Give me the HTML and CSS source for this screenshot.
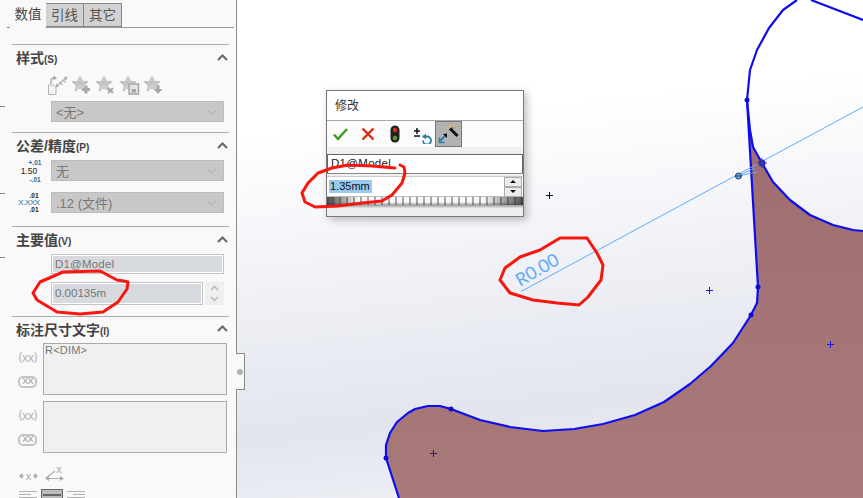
FILE: index.html
```html
<!DOCTYPE html>
<html>
<head>
    <title>Modify dimension</title>
    <meta charset="UTF-8">
    <link rel="stylesheet" href="styles.css">
</head>
<body>
    <svg width="0" height="0" class="defs">
        <defs>
            <linearGradient id="starGrey" x1="0" y1="0" x2="0" y2="1">
                <stop offset="0" stop-color="#cfcfcf"/>
                <stop offset="0.5" stop-color="#c4c4c4"/>
                <stop offset="1" stop-color="#dcdcdc"/>
            </linearGradient>
            <symbol id="star" viewBox="0 0 20 20">
                <path d="M8 1l2.300 5.200 5.700.5-4.300 3.700 1.300 5.600L8 13.100l-5 2.900 1.300-5.600L0 6.700l5.700-.5z" fill="url(#starGrey)" stroke="#b4b4b4" stroke-width="0.700"/>
            </symbol>
        </defs>
    </svg>

    <!-- Property manager -->
    <div class="panel">
        <span class="tick tick-1"></span>
        <span class="tick tick-2"></span>
        <span class="tick tick-3"></span>
        <span class="tick tick-4"></span>
        <div class="tabs">
            <div class="tab tab-active">数值</div>
            <div class="tab">引线</div>
            <div class="tab">其它</div>
        </div>

        <div class="section section-style">
            <div class="section-head"><span class="section-title">样式<small>(S)</small></span><svg class="caret" width="11" height="7" viewBox="0 0 11 7"><path d="M1 6l4.500-4.500L10 6"/></svg></div>
            <div class="style-icons">
                <svg width="20" height="20" viewBox="0 0 20 20">
                    <path d="M.5 10h5l2.500 2.500v7h-7.500z" class="doc"/>
                    <path d="M3 9V6a3 3 0 0 1 3-3" class="doc-arrow"/>
                    <path d="M5.500 .5L9 3 5.500 5.500z" class="fill-grey"/>
                    <path d="M9 11l9-8M11.500 7l3 3M14.500 4.500l3 3" class="dim-arrow"/>
                    <path d="M7.500 12.500l1-4 2.500 3zM19.500 1.500l-1.200 4-2.500-3z" class="fill-grey"/>
                </svg>
                <svg width="20" height="20" viewBox="0 0 20 20"><use href="#star" width="20" height="20"/><path d="M10 14.500h8M14 10.500v8" class="badge"/></svg>
                <svg width="20" height="20" viewBox="0 0 20 20"><use href="#star" width="20" height="20"/><path d="M12 13l5 5M17 13l-5 5" class="badge-thin"/></svg>
                <svg width="20" height="20" viewBox="0 0 20 20"><use href="#star" width="20" height="20"/><rect x="9" y="9" width="9.500" height="10" class="floppy"/><rect x="11.500" y="14" width="4.500" height="3.500" class="floppy-in"/></svg>
                <svg width="20" height="20" viewBox="0 0 20 20"><use href="#star" width="20" height="20"/><path d="M12.500 10h3v4h3l-4.500 5-4.500-5h3z" class="fill-grey"/></svg>
            </div>
            <div class="select-row">
                <div class="select select-style">&lt;无&gt;<svg class="chevron" width="11" height="6" viewBox="0 0 11 6"><path d="M1 1l4.500 4L10 1"/></svg></div>
            </div>
        </div>

        <div class="section section-tol">
            <div class="section-head"><span class="section-title">公差/精度<small>(P)</small></span><svg class="caret" width="11" height="7" viewBox="0 0 11 7"><path d="M1 6l4.500-4.500L10 6"/></svg></div>
            <div class="select-row">
                <div class="tol-icon"><span class="tol-up">+.01</span><span class="tol-mid">1.50</span><span class="tol-up">-.01</span></div>
                <div class="select">无<svg class="chevron" width="11" height="6" viewBox="0 0 11 6"><path d="M1 1l4.500 4L10 1"/></svg></div>
            </div>
            <div class="select-row">
                <div class="tol-icon"><span class="tol-side">.01</span><span class="tol-x">X.XXX</span><span class="tol-side">.01</span></div>
                <div class="select">.12 (文件)<svg class="chevron" width="11" height="6" viewBox="0 0 11 6"><path d="M1 1l4.500 4L10 1"/></svg></div>
            </div>
        </div>

        <div class="section section-main">
            <div class="section-head"><span class="section-title">主要值<small>(V)</small></span><svg class="caret" width="11" height="7" viewBox="0 0 11 7"><path d="M1 6l4.500-4.500L10 6"/></svg></div>
            <div class="field field-name">D1@Model</div>
            <div class="value-row">
                <div class="field field-value">0.00135m</div>
                <div class="spin">
                    <svg width="9" height="6" viewBox="0 0 9 6"><path d="M1 5l3.500-3.500L8 5"/></svg>
                    <svg width="9" height="6" viewBox="0 0 9 6"><path d="M1 1l3.500 3.500L8 1"/></svg>
                </div>
            </div>
        </div>

        <div class="section section-text">
            <div class="section-head section-head-text"><span class="section-title">标注尺寸文字<small>(I)</small></span><svg class="caret" width="11" height="7" viewBox="0 0 11 7"><path d="M1 6l4.500-4.500L10 6"/></svg></div>
            <div class="text-row">
                <div class="text-icons">
                    <span class="paren">(xx)</span>
                    <span class="boxed">xx</span>
                </div>
                <div class="text-box">R&lt;DIM&gt;</div>
            </div>
            <div class="text-row text-row-two">
                <div class="text-icons">
                    <span class="paren">(xx)</span>
                    <span class="boxed">xx</span>
                </div>
                <div class="text-box"></div>
            </div>
            <div class="extra-icons">
                <svg width="19" height="12" viewBox="0 0 19 12">
                    <path d="M0 6l3.500-3v6zM19 6l-3.500-3v6z" class="fill-grey"/>
                    <path d="M3 6h2M14 6h2" class="dim-arrow"/>
                    <text x="9.500" y="9.500" class="icon-x">x</text>
                </svg>
                <svg width="19" height="17" viewBox="0 0 19 17">
                    <path d="M1 13l9-7M1 13.500h17" class="dim-arrow"/>
                    <path d="M0 13.500l4-2.500v5zM19 13.500l-4-2.500v5z" class="fill-grey"/>
                    <text x="14" y="8" class="icon-x">x</text>
                </svg>
            </div>
            <div class="align-icons">
                <svg width="18" height="12" viewBox="0 0 18 12"><path d="M0 1.500h18M0 4.500h12M0 7.500h18" class="align-line"/></svg>
                <span class="align-on"><svg width="18" height="12" viewBox="0 0 18 12"><path d="M0 2h18M4 6h10" class="align-line-on"/></svg></span>
                <svg width="18" height="12" viewBox="0 0 18 12"><path d="M0 1.500h18M6 4.500h12M0 7.500h18" class="align-line"/></svg>
            </div>
        </div>
        <div class="notch"><span class="notch-dot"></span></div>
    </div>

    <!-- Graphics area -->
    <div class="canvas">
        <svg class="model" width="626" height="498" viewBox="237 0 626 498">
            <defs>
                <linearGradient id="body" x1="0" y1="0" x2="0" y2="1">
                    <stop offset="0" stop-color="#9e6d71"/>
                    <stop offset="1" stop-color="#a97a7a"/>
                </linearGradient>
            </defs>
            <path class="body" d="M399 498L386 458V445L390 433L397 422L408 413L415 409L428 406H440L451 409L480 420L510 427L543 431L574 429L603 424L635 415L664 402L690 384L711 366L733 343L751 315L757 303L758 287L749 125L753 147L762 163L773 182L790 200L810 215L833 225L853 230L863 231V498Z"/>
            <path class="edge" d="M399 498L386 458V445L390 433L397 422L408 413L415 409L428 406H440L451 409L480 420L510 427L543 431L574 429L603 424L635 415L664 402L690 384L711 366L733 343L751 315L757 303L758 287L747 100L750 70L757 50L769 28L783 10L797 0"/>
            <path class="edge" d="M811 0L863 20M747 100L750 130L753 147L762 163L773 182L790 200L810 215L833 225L853 230L863 231"/>
            <g class="edge-dots">
                <circle cx="747" cy="100" r="2.500"/>
                <circle cx="758" cy="287" r="2.500"/>
                <circle cx="751" cy="315" r="2.500"/>
                <circle cx="451" cy="409" r="2.500"/>
                <circle cx="386" cy="458" r="2.500"/>
            </g>
            <path class="leader" d="M521 291.500L863 107M738 176L755 168M738 176L757 172"/>
            <text class="dim-text" transform="translate(520 287) rotate(-30)">R0.00</text>
            <circle class="handle" cx="738.500" cy="176" r="3"/>
            <path class="handle-mid" d="M736 176h5"/>
            <circle class="pivot" cx="762" cy="163" r="3.500"/>
            <path class="pivot-cross" d="M757 163h10M762 158v10"/>
            <path class="cross cross-blue" d="M706 290.500h7M709.500 287v7M827 344.500h7M830.500 341v7"/>
            <path class="cross cross-navy" d="M430 453.500h7M433.500 450v7"/>
            <path class="cross cross-black" d="M546 195.500h7M549.500 192v7"/>
        </svg>

        <!-- Modify dialog -->
        <div class="dialog">
            <div class="dialog-title">修改</div>
            <div class="dialog-tools">
                <svg width="18" height="18" viewBox="0 0 18 18"><path d="M2 9.500l4 4.500L15 4" class="tool-ok"/></svg>
                <svg width="18" height="18" viewBox="0 0 18 18"><path d="M3.500 3.500l11 11M14.500 3.500l-11 11" class="tool-no"/></svg>
                <svg width="18" height="18" viewBox="0 0 18 18">
                    <rect x="4.500" y="0.500" width="9" height="17" rx="4.500" class="light-body"/>
                    <circle cx="9" cy="5" r="2.300" class="light-red"/>
                    <circle cx="9" cy="13" r="2.300" class="light-green"/>
                </svg>
                <svg width="20" height="20" viewBox="0 0 20 20">
                    <path d="M1 7h6M4 4v6M1 12h6" class="tool-black"/>
                    <path d="M9.500 12.500h4.500a4 4 0 1 1-4 4" class="tool-blue"/>
                    <path d="M13 9.500v6l-3.500-3z" class="tool-blue-fill"/>
                </svg>
                <span class="tool-on">
                    <svg width="22" height="22" viewBox="0 0 22 22">
                        <path d="M2 18L8 12" class="wand-blue"/>
                        <path d="M1.500 14.500v5h5" class="wand-blue-thin"/>
                        <path d="M9 10.500l-4 .5 4 4z" class="wand-black-fill"/>
                        <path d="M12 5.500l7.500 7.500" class="wand-black"/>
                        <path d="M11 3l2 1M8 5h2M15 1.500l1 2" class="wand-spark"/>
                        <path d="M14 4.500l1.500 1" class="wand-red"/>
                    </svg>
                </span>
            </div>
            <div class="dialog-name">D1@Model</div>
            <div class="dialog-value">
                <span class="selected">1.35mm</span>
                <div class="dialog-spin">
                    <span class="spin-btn"><i class="arrow-up"></i></span>
                    <span class="spin-btn"><i class="arrow-down"></i></span>
                </div>
            </div>
            <div class="wheel"></div>
            <div class="dialog-foot"></div>
        </div>
    </div>

    <!-- Red pen notes on top of the screenshot -->
    <svg class="scribbles" width="863" height="498" viewBox="0 0 863 498">
        <polyline points="128,282 127,289 118,302 103,312 80,314 57,312 37,300 33,293 40,282 63,272 100,271 117,280 124,281 128,282"/>
        <polyline points="400,165 404,167 405,173 402,183 392,195 382,201 362,203 338,206 315,207 305,202 302,193 308,183 318,173 332,168 348,165 372,166 395,168"/>
        <polyline points="587,238 597,253 603,265 601,280 588,297 579,305 557,303 533,300 510,293 500,280 505,268 520,257 540,250 560,238 587,238"/>
    </svg>
</body>
</html>
```

FILE: styles.css
```css
html, body {
    margin: 0;
    height: 498px;
    overflow: hidden;
}
body {
    display: flex;
    position: relative;
    font-family: "Liberation Sans", "Noto Sans CJK SC", sans-serif;
}
.defs {
    position: absolute;
}

/* left panel */
.panel {
    position: relative;
    z-index: 2;
    width: 237px;
    height: 498px;
    box-sizing: border-box;
    flex: none;
    padding-top: 3px;
    background: #f9f9f9;
    border-right: 1px solid #8a8a8a;
}
.tick {
    position: absolute;
    left: 0;
    width: 5px;
    height: 1px;
    background: #888;
}
.tick-1 { top: 27px; left: 7px; width: 3px; }
.tick-2 { top: 106px; }
.tick-3 { top: 193px; }
.tick-4 { top: 257px; }
.tabs {
    display: flex;
    height: 24px;
    margin-left: 9px;
    margin-right: 2px;
    border-bottom: 1px solid #999;
}
.tab {
    width: 38px;
    height: 24px;
    box-sizing: border-box;
    text-align: center;
    font-size: 13.500px;
    line-height: 23px;
    color: #555;
    background: #d2d2d2;
    border: 1px solid #888;
    border-left: 0;
}
.tab-active {
    width: 37px;
    height: 25px;
    padding-left: 1px;
    background: #f9f9f9;
    border: 0;
    color: #444;
}
.section {
    margin: 0 7px 0 12px;
    border-top: 1px solid #aaa;
}
.section-style {
    margin-top: 16px;
    height: 87px;
}
.section-tol { height: 93px; }
.section-main { height: 89px; }
.section-head {
    display: flex;
    justify-content: space-between;
    align-items: center;
    height: 27px;
    box-sizing: border-box;
    padding: 0 1px 3px 4px;
}
.section-head-text { height: 26px; }
.section-title {
    font-size: 14px;
    font-weight: bold;
    color: #444;
}
.section-title small {
    font-size: 10px;
}
.caret path {
    fill: none;
    stroke: #666;
    stroke-width: 2;
}

/* style row */
.style-icons {
    display: flex;
    gap: 4px;
    height: 20px;
    margin: 3px 0 6px 36px;
}
.doc {
    fill: #f4f4f4;
    stroke: #b4b4b4;
}
.doc-arrow {
    fill: none;
    stroke: #b0b0b0;
    stroke-width: 1.500;
}
.dim-arrow {
    fill: none;
    stroke: #b0b0b0;
    stroke-width: 1.200;
}
.fill-grey {
    fill: #a8a8a8;
}
.badge {
    fill: none;
    stroke: #a8a8a8;
    stroke-width: 3;
}
.badge-thin {
    fill: none;
    stroke: #a8a8a8;
    stroke-width: 2;
}
.floppy {
    fill: #e4e4e4;
    stroke: #a6a6a6;
    stroke-width: 1.500;
}
.floppy-in {
    fill: #a6a6a6;
}
.select-row {
    display: flex;
    margin-bottom: 11px;
}
.select {
    display: flex;
    justify-content: space-between;
    align-items: center;
    width: 173px;
    height: 21px;
    box-sizing: border-box;
    padding: 0 6px 0 4px;
    font-size: 13px;
    color: #777;
    background: #c8c8c8;
    border: 1px solid #bcbcbc;
}
.select-style {
    margin-left: 39px;
}
.chevron path {
    fill: none;
    stroke: #ababab;
}
.tol-icon {
    display: flex;
    flex-direction: column;
    align-items: center;
    justify-content: center;
    width: 39px;
    height: 21px;
    box-sizing: border-box;
    padding: 0 11px 0 6px;
    font-size: 6.500px;
    line-height: 7px;
    font-weight: bold;
}
.tol-up { color: #1f6f96; padding-left: 12px; }
.tol-mid { color: #222; font-size: 8.500px; line-height: 10px; font-weight: normal; }
.tol-side { color: #222; padding-left: 10px; }
.tol-x { color: #1f6f96; font-weight: normal; font-size: 8px; letter-spacing: -0.400px; }

/* primary value */
.field {
    box-sizing: border-box;
    font-size: 11.500px;
    color: #777;
    background: #d6d9dd;
    border: 1px solid #fff;
    outline: 1px solid #c4c4c4;
    outline-offset: -1px;
    padding-left: 3px;
}
.field-name {
    width: 173px;
    height: 20px;
    margin-left: 39px;
    line-height: 18px;
    letter-spacing: 0.200px;
    box-shadow: inset 0 0 0 1px #fff;
}
.value-row {
    display: flex;
    gap: 2px;
    margin: 8px 0 0 39px;
}
.field-value {
    width: 152px;
    height: 23px;
    line-height: 21px;
    box-shadow: inset 0 0 0 1px #fff;
}
.spin {
    display: flex;
    flex-direction: column;
    justify-content: space-around;
    align-items: center;
    width: 19px;
    height: 23px;
    background: #efefef;
}
.spin path {
    fill: none;
    stroke: #bbb;
    stroke-width: 1.600;
}

/* dimension text */
.text-row {
    display: flex;
    height: 52px;
}
.text-row-two {
    margin-top: 6px;
}
.text-icons {
    display: flex;
    flex-direction: column;
    align-items: center;
    justify-content: space-around;
    width: 31px;
    padding: 2px 0;
    box-sizing: border-box;
}
.paren {
    font-family: "DejaVu Sans", sans-serif;
    font-size: 11.500px;
    line-height: 14px;
    letter-spacing: -1px;
    color: #b4b4b4;
}
.boxed {
    width: 15px;
    height: 8px;
    line-height: 6px;
    text-align: center;
    font-family: "DejaVu Sans", sans-serif;
    font-size: 11px;
    letter-spacing: -1px;
    color: #aaa;
    border: 2px solid #c4c4c4;
    border-radius: 5px;
}
.text-box {
    width: 184px;
    height: 52px;
    box-sizing: border-box;
    padding-left: 1px;
    font-size: 11px;
    line-height: 12px;
    letter-spacing: 0.200px;
    color: #777;
    background: #f0f0f0;
    border: 1px solid #aaa;
}
.extra-icons {
    display: flex;
    align-items: flex-end;
    gap: 7px;
    height: 18px;
    margin: 11px 0 0 7px;
}
.extra-icons svg {
    overflow: visible;
}
.icon-x {
    font-size: 11px;
    text-anchor: middle;
    fill: #aaa;
}
.align-icons {
    display: flex;
    gap: 4px;
    align-items: flex-start;
    margin: 8px 0 0 7px;
}
.align-line {
    stroke: #b0b0b0;
    fill: none;
}
.align-on {
    display: block;
    width: 22px;
    height: 14px;
    box-sizing: border-box;
    padding: 3px 1px;
    margin-top: -1px;
    background: #bcbcbc;
    border: 1px solid #666;
}
.align-on svg {
    display: block;
    width: 18px;
}
.align-line-on {
    stroke: #666;
    stroke-width: 2;
}
.notch {
    position: absolute;
    left: 236px;
    top: 353px;
    width: 9px;
    height: 37px;
    box-sizing: border-box;
    background: #f9f9f9;
    border: 1px solid #8a8a8a;
    border-left: 0;
    display: flex;
    align-items: center;
    justify-content: center;
}
.notch-dot {
    width: 6px;
    height: 6px;
    margin-left: -1px;
    border-radius: 50%;
    background: #b0b0b0;
}

/* graphics area */
.canvas {
    position: relative;
    flex: 1;
    height: 498px;
    background: linear-gradient(174deg, #fff 24%, #e2e5ee 78%, #f3f4f8 100%);
}
.model {
    position: absolute;
    left: 0;
    top: 0;
}
.body {
    fill: url(#body);
}
.edge {
    fill: none;
    stroke: #0d0df0;
    stroke-width: 2.200;
    stroke-linejoin: round;
}
.edge-dots circle {
    fill: #0a0ad8;
}
.leader {
    fill: none;
    stroke: #62aafb;
    stroke-width: 1;
}
.dim-text {
    font-family: "Lato", sans-serif;
    font-size: 18px;
    fill: #62aafb;
}
.handle {
    fill: #6db2fb;
    stroke: #22364f;
}
.handle-mid {
    stroke: #22364f;
}
.pivot {
    fill: #2b2bb8;
}
.pivot-cross {
    stroke: #3a3ab0;
}
.cross {
    fill: none;
    stroke-width: 1;
}
.cross-blue { stroke: #1414e0; }
.cross-navy { stroke: #2a1a5a; }
.cross-black { stroke: #0a0a50; }

/* modify dialog */
.dialog {
    position: absolute;
    left: 89px;
    top: 90px;
    width: 198px;
    height: 127px;
    box-sizing: border-box;
    background: #f0f0f0;
    border: 1px solid #777;
    box-shadow: 3px 3px 8px rgba(0, 0, 0, 0.25);
}
.dialog-title {
    height: 30px;
    box-sizing: border-box;
    padding-left: 8px;
    font-size: 12px;
    line-height: 30px;
    color: #333;
    background: #fff;
    border-bottom: 1px solid #aaa;
}
.dialog-tools {
    display: flex;
    align-items: center;
    gap: 9px;
    height: 26px;
    padding-left: 5px;
    background: #fbfbfb;
}
.dialog-tools svg {
    display: block;
}
.tool-ok {
    fill: none;
    stroke: #3f9a1d;
    stroke-width: 2.400;
}
.tool-no {
    fill: none;
    stroke: #d92a10;
    stroke-width: 2.400;
}
.light-body { fill: #222; }
.light-red { fill: #c8321e; }
.light-green { fill: #4f9a22; }
.tool-black {
    fill: none;
    stroke: #111;
    stroke-width: 1.500;
}
.tool-blue {
    fill: none;
    stroke: #2f7ba8;
    stroke-width: 1.800;
}
.tool-blue-fill {
    fill: #2f7ba8;
}
.tool-on {
    display: flex;
    align-items: center;
    justify-content: center;
    width: 27px;
    height: 26px;
    box-sizing: border-box;
    margin-left: -7px;
    background: #b2b2b2;
    border: 1px solid #777;
}
.wand-blue {
    fill: none;
    stroke: #2f7ba8;
    stroke-width: 2;
}
.wand-blue-thin {
    fill: none;
    stroke: #2f7ba8;
    stroke-width: 1.500;
}
.wand-black {
    stroke: #111;
    stroke-width: 3;
}
.wand-black-fill {
    fill: #111;
}
.wand-spark {
    fill: none;
    stroke: #f0c040;
    stroke-width: 1.500;
}
.wand-red {
    stroke: #c83a1e;
    stroke-width: 1.500;
}
.dialog-name {
    height: 19px;
    box-sizing: border-box;
    margin-top: 7px;
    padding-left: 3px;
    font-size: 11.500px;
    line-height: 17px;
    letter-spacing: 0.300px;
    color: #222;
    background: #fff;
    border: 1px solid #666;
    border-bottom-width: 0;
    box-shadow: 0 1px 0 #888;
}
.dialog-value {
    display: flex;
    justify-content: space-between;
    align-items: center;
    height: 21px;
    box-sizing: border-box;
    margin-top: 3px;
    padding: 0 1px 0 2px;
    background: #fff;
    border-top: 1px solid #ccc;
    border-bottom: 1px solid #bbb;
}
.selected {
    padding: 0 2px 0 1px;
    font-size: 11px;
    line-height: 13px;
    color: #111;
    background: #99c9ef;
}
.dialog-spin {
    display: flex;
    flex-direction: column;
}
.spin-btn {
    display: flex;
    justify-content: center;
    align-items: center;
    width: 16px;
    height: 8px;
    background: #ececec;
    border: 1px solid #aaa;
}
.arrow-up {
    border: 3.500px solid transparent;
    border-top: 0;
    border-bottom: 3.500px solid #111;
}
.arrow-down {
    border: 3.500px solid transparent;
    border-bottom: 0;
    border-top: 3.500px solid #111;
}
.wheel {
    height: 8px;
    background:
        linear-gradient(to right, rgba(40, 40, 40, 0.85), rgba(40, 40, 40, 0) 16%, rgba(40, 40, 40, 0) 80%, rgba(40, 40, 40, 0.8)),
        linear-gradient(rgba(0, 0, 0, 0) 60%, rgba(0, 0, 0, 0.35)),
        repeating-linear-gradient(to right, #fafafa 0, #fafafa 5px, #a8a8a8 5px, #a8a8a8 7px);
}
.dialog-foot {
    height: 11px;
    background: linear-gradient(#9a9a9a, #efefef 30%);
}

/* red pen */
.scribbles {
    position: absolute;
    z-index: 3;
    left: 0;
    top: 0;
    pointer-events: none;
}
.scribbles polyline {
    fill: none;
    stroke: #f8160e;
    stroke-width: 3;
    stroke-linecap: round;
    stroke-linejoin: round;
}
```
